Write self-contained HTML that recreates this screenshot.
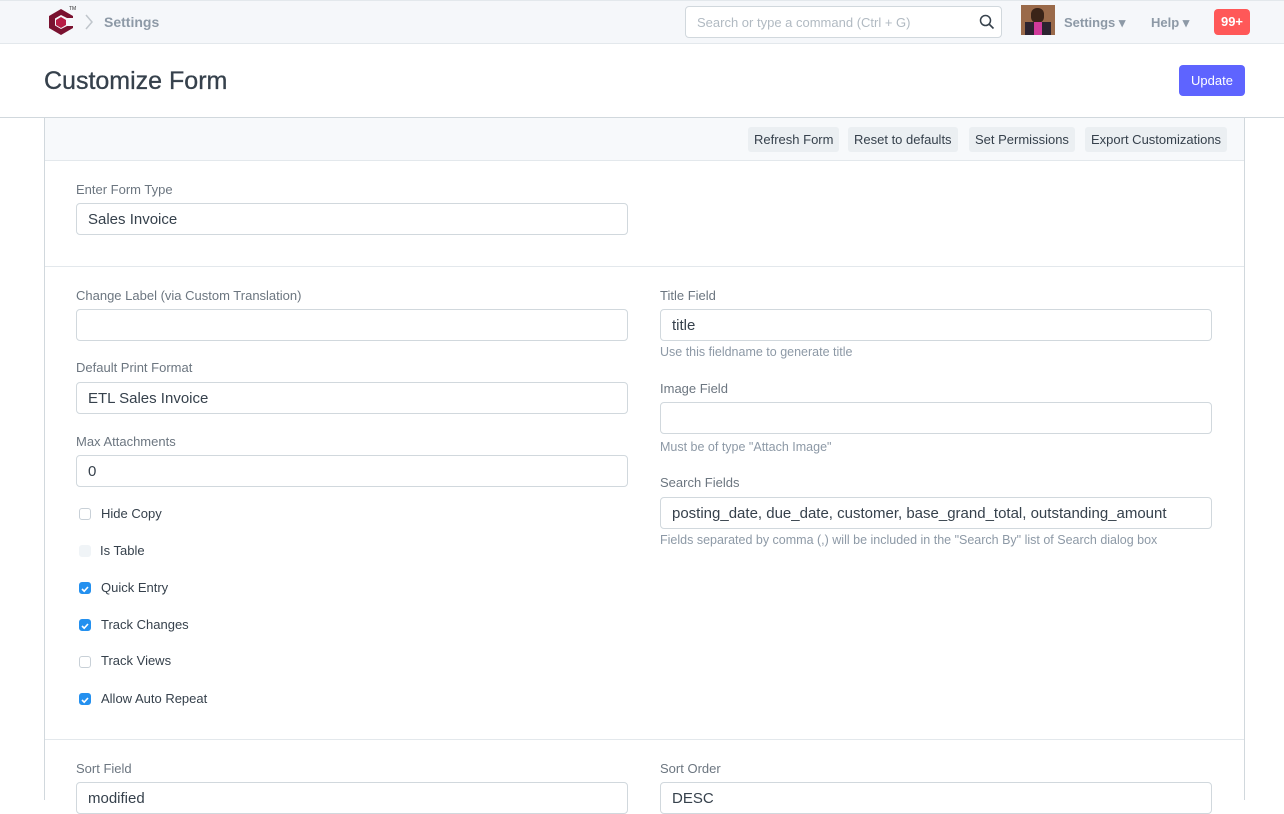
<!DOCTYPE html>
<html><head><style>
*{box-sizing:border-box;margin:0;padding:0}
body{width:1284px;height:800px;overflow:hidden;background:#fff;font-family:"Liberation Sans",sans-serif;color:#36414c;position:relative}
.a{position:absolute}
.nav{left:0;top:0;width:1284px;height:44px;background:#f5f7fa;border-bottom:1px solid #e3e8ec;border-top:1px solid #e3e8ec}
.lbl{font-size:13px;color:#6c7680}
.inp{height:32px;border:1px solid #d1d8dd;border-radius:4px;font-size:15px;color:#36414c;padding:7px 11px;background:#fff}
.desc{font-size:12.5px;color:#8d99a6}
.cb{width:12px;height:12px;border:1px solid #c8d0d7;border-radius:3px;background:#fff}
.cb.on{background:#2490ef;border-color:#2490ef}
.cb.dis{background:#f0f4f7;border-color:#f0f4f7}
.ct{font-size:13px;color:#36414c}
.tb{top:127px;height:25px;background:#ebeff2;border-radius:3px;font-size:13px;color:#36414c;padding:5px 6px}
.hr{left:45px;width:1199px;height:1px;background:#e3e8ec}
</style></head><body>
<div class="a nav"></div>
<svg class="a" style="left:47px;top:8px" width="28" height="28" viewBox="0 0 28 28"><polygon points="14,1 26,8 26,10 20,10 14,7 8,10.5 8,17.5 14,21 20,18 26,18 26,20 14,27 2,20 2,8" fill="#7a1230"/><polygon points="14,9 19,12 19,17 14,20 9,17 9,12" fill="#b71d45"/></svg>
<div class="a" style="left:69px;top:6px;font-size:5px;color:#333">TM</div>
<svg class="a" style="left:84px;top:14px" width="10" height="16"><path d="M2 1l6 7-6 7" stroke="#c0c6cc" stroke-width="1.5" fill="none"/></svg>
<div class="a" style="left:104px;top:14px;font-size:14px;font-weight:bold;color:#8d99a6">Settings</div>
<div class="a" style="left:685px;top:6px;width:317px;height:32px;background:#fff;border:1px solid #d1d8dd;border-radius:4px;font-size:13px;color:#b1bac2;padding:8px 11px">Search or type a command (Ctrl + G)</div>
<svg class="a" style="left:979px;top:14px" width="16" height="16"><circle cx="6.5" cy="6.5" r="5" stroke="#36414c" stroke-width="1.5" fill="none"/><path d="M10 10l4.5 4.5" stroke="#36414c" stroke-width="1.6"/></svg>
<div class="a" style="left:1021px;top:5px;width:34px;height:30px;background:#9a6a4a"><div class="a" style="left:10px;top:3px;width:13px;height:15px;border-radius:6px;background:#3a2418"></div><div class="a" style="left:4px;top:17px;width:26px;height:13px;background:#2c2330"></div><div class="a" style="left:13px;top:17px;width:8px;height:13px;background:#d03a9a"></div></div>
<div class="a" style="left:1064px;top:15px;font-size:13px;font-weight:bold;color:#8d99a6">Settings ▾</div>
<div class="a" style="left:1151px;top:15px;font-size:13px;font-weight:bold;color:#8d99a6">Help ▾</div>
<div class="a" style="left:1214px;top:9px;width:36px;height:26px;background:#ff5858;border-radius:4px;color:#fff;font-size:13px;font-weight:bold;text-align:center;line-height:26px">99+</div>
<div class="a" style="left:44px;top:67px;font-size:25px;color:#36414c;-webkit-text-stroke:0.3px #36414c">Customize Form</div>
<div class="a" style="left:1179px;top:65px;width:66px;height:31px;background:#5e64ff;border-radius:4px;color:#fff;font-size:13px;text-align:center;line-height:31px">Update</div>
<div class="a" style="left:0;top:117px;width:1284px;height:1px;background:#d1d8dd"></div>
<div class="a" style="left:44px;top:118px;width:1px;height:682px;background:#d1d8dd"></div>
<div class="a" style="left:1244px;top:118px;width:1px;height:682px;background:#d1d8dd"></div>
<div class="a" style="left:45px;top:118px;width:1199px;height:43px;background:#f7f9fb;border-bottom:1px solid #e3e8ec"></div>
<div class="a tb" style="left:748px">Refresh Form</div>
<div class="a tb" style="left:848px">Reset to defaults</div>
<div class="a tb" style="left:969px">Set Permissions</div>
<div class="a tb" style="left:1085px">Export Customizations</div>
<div class="a lbl" style="left:76px;top:182px">Enter Form Type</div>
<div class="a inp" style="left:76px;top:203px;width:552px">Sales Invoice</div>
<div class="a hr" style="top:266px"></div>
<div class="a lbl" style="left:76px;top:288px">Change Label (via Custom Translation)</div>
<div class="a inp" style="left:76px;top:309px;width:552px"></div>
<div class="a lbl" style="left:76px;top:360px">Default Print Format</div>
<div class="a inp" style="left:76px;top:382px;width:552px">ETL Sales Invoice</div>
<div class="a lbl" style="left:76px;top:434px">Max Attachments</div>
<div class="a inp" style="left:76px;top:455px;width:552px">0</div>
<div class="a cb" style="left:79px;top:508px"></div><div class="a ct" style="left:101px;top:506px">Hide Copy</div>
<div class="a cb dis" style="left:79px;top:545px"></div><div class="a ct" style="left:100px;top:543px">Is Table</div>
<div class="a cb on" style="left:79px;top:582px"></div><div class="a ct" style="left:101px;top:580px">Quick Entry</div>
<div class="a cb on" style="left:79px;top:619px"></div><div class="a ct" style="left:101px;top:617px">Track Changes</div>
<div class="a cb" style="left:79px;top:656px"></div><div class="a ct" style="left:101px;top:653px">Track Views</div>
<div class="a cb on" style="left:79px;top:693px"></div><div class="a ct" style="left:101px;top:691px">Allow Auto Repeat</div>
<div class="a lbl" style="left:660px;top:288px">Title Field</div>
<div class="a inp" style="left:660px;top:309px;width:552px">title</div>
<div class="a desc" style="left:660px;top:345px">Use this fieldname to generate title</div>
<div class="a lbl" style="left:660px;top:381px">Image Field</div>
<div class="a inp" style="left:660px;top:402px;width:552px"></div>
<div class="a desc" style="left:660px;top:440px">Must be of type "Attach Image"</div>
<div class="a lbl" style="left:660px;top:475px">Search Fields</div>
<div class="a inp" style="left:660px;top:497px;width:552px">posting_date, due_date, customer, base_grand_total, outstanding_amount</div>
<div class="a desc" style="left:660px;top:533px">Fields separated by comma (,) will be included in the "Search By" list of Search dialog box</div>
<div class="a hr" style="top:739px"></div>
<div class="a lbl" style="left:76px;top:761px">Sort Field</div>
<div class="a inp" style="left:76px;top:782px;width:552px">modified</div>
<div class="a lbl" style="left:660px;top:761px">Sort Order</div>
<div class="a inp" style="left:660px;top:782px;width:552px">DESC</div>
<svg class="a" style="left:80px;top:584px" width="10" height="10"><path d="M2 5l2.2 2.2L8 3" stroke="#fff" stroke-width="1.6" fill="none"/></svg>
<svg class="a" style="left:80px;top:621px" width="10" height="10"><path d="M2 5l2.2 2.2L8 3" stroke="#fff" stroke-width="1.6" fill="none"/></svg>
<svg class="a" style="left:80px;top:695px" width="10" height="10"><path d="M2 5l2.2 2.2L8 3" stroke="#fff" stroke-width="1.6" fill="none"/></svg>
</body></html>
